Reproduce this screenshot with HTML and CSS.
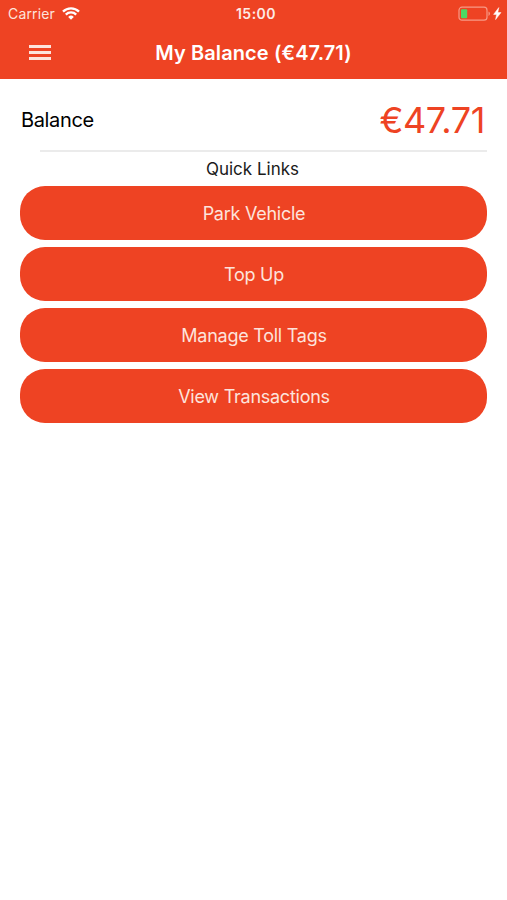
FILE: index.html
```html
<!DOCTYPE html>
<html lang="en">
<head>
    <meta charset="UTF-8">
    <meta name="viewport" content="width=device-width, initial-scale=1.0">
    <title>My Balance</title>
    <link rel="stylesheet" href="styles.css">
</head>
<body>
    <header class="header">
        <div class="status-bar">
            <div class="status-left">
                <span class="carrier">Carrier</span>
                <svg class="wifi" width="18" height="13" viewBox="0 0 18 13" fill="none" stroke="#fff" stroke-width="2.3">
                    <path d="M1 4.6a11.3 11.3 0 0 1 16 0"/>
                    <path d="M3.8 7.6a7.4 7.4 0 0 1 10.4 0"/>
                    <path d="M9 12.8L6.2 9.9a4 4 0 0 1 5.6 0z" fill="#fff" stroke="none"/>
                </svg>
            </div>
            <span class="clock">15:00</span>
            <div class="status-right">
                <svg class="battery" width="44" height="16" viewBox="0 0 44 16">
                    <rect x="1" y="1.2" width="28" height="13" rx="3" fill="none" stroke="#f79a86" stroke-width="1.2"/>
                    <rect x="3" y="3.2" width="6.2" height="9" rx="1" fill="#4cd964"/>
                    <path d="M30.5 5.5a2.4 2.4 0 0 1 0 4.4z" fill="#f79a86"/>
                    <path d="M40.8 1.6L35.6 8.4h3L37.6 13.6l5.4-7h-3.2z" fill="#fff" stroke="#fff" stroke-width="0.5"/>
                </svg>
            </div>
        </div>
        <div class="nav-bar">
            <button type="button" class="menu-btn" aria-label="Menu">
                <span></span>
                <span></span>
                <span></span>
            </button>
            <h1 class="title">My Balance (€47.71)</h1>
        </div>
    </header>

    <main class="content">
        <div class="balance">
            <span class="balance-label">Balance</span>
            <span class="balance-amount">€47.71</span>
        </div>
        <hr class="divider">
        <h2 class="links-title">Quick Links</h2>
        <div class="links">
            <button type="button" class="link-btn">Park Vehicle</button>
            <button type="button" class="link-btn">Top Up</button>
            <button type="button" class="link-btn">Manage Toll Tags</button>
            <button type="button" class="link-btn">View Transactions</button>
        </div>
    </main>
</body>
</html>
```

FILE: styles.css
```css
* {
    box-sizing: border-box;
}
body {
    margin: 0;
    font-family: Inter, sans-serif;
    background-color: #fff;
    color: #000;
}
.header {
    height: 79px;
    background-color: #ee4323;
    color: #fff;
}
.status-bar {
    display: grid;
    grid-template-columns: 1fr auto 1fr;
    align-items: center;
    height: 27px;
    padding: 0 5px 0 8px;
    font-size: 14px;
}
.status-left {
    display: flex;
    align-items: center;
    gap: 7px;
}
.carrier {
    letter-spacing: 0.15px;
    color: #fde3dc;
}
.clock {
    padding-left: 2px;
    font-weight: 600;
    letter-spacing: 0.5px;
    color: #fdebe6;
}
.status-right {
    display: flex;
    justify-content: flex-end;
}
.nav-bar {
    display: grid;
    grid-template-columns: 80px 1fr 80px;
    align-items: center;
    height: 51px;
}
.menu-btn {
    display: flex;
    flex-direction: column;
    gap: 3px;
    width: 22px;
    margin-left: 29px;
    padding: 0;
    border: none;
    background: none;
}
.menu-btn span {
    height: 3px;
    width: 22px;
    background-color: #fde3dc;
}
.title {
    margin: 0;
    font-size: 20px;
    font-weight: 600;
    letter-spacing: 0.1px;
    text-align: center;
    white-space: nowrap;
}
.content {
    padding: 0 20px;
}
.balance {
    display: flex;
    justify-content: space-between;
    align-items: center;
    height: 71px;
    padding: 11px 2px 0 1px;
}
.balance-label {
    font-size: 20px;
    letter-spacing: -0.35px;
}
.balance-amount {
    font-size: 36px;
    letter-spacing: -0.4px;
    color: #ee4323;
}
.divider {
    height: 2px;
    margin: 0 0 0 20px;
    border: none;
    background-color: #ebebeb;
}
.links-title {
    margin: 0;
    padding-right: 2px;
    font-size: 17px;
    font-weight: 400;
    line-height: 34px;
    text-align: center;
    color: #1a1a1a;
}
.links {
    display: flex;
    flex-direction: column;
    gap: 7px;
}
.link-btn {
    height: 54px;
    padding: 0 0 0 1px;
    border: none;
    border-radius: 25px;
    background-color: #ee4323;
    color: #fde3dc;
    font-family: inherit;
    font-size: 18px;
    letter-spacing: -0.25px;
}
```
